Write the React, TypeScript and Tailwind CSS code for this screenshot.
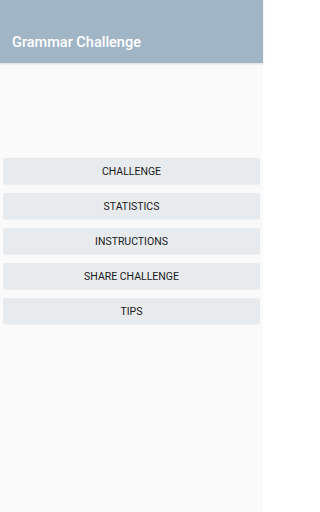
const items = ['CHALLENGE', 'STATISTICS', 'INSTRUCTIONS', 'SHARE CHALLENGE', 'TIPS']

export default function App() {
  return (
    <div className="flex h-[512px] w-[263px] flex-col bg-[#fafafa] font-['Roboto',sans-serif]">
      <header className="flex h-[63px] shrink-0 items-end bg-[#a0b5c6] px-3 pb-[13px] shadow-[0_1px_2px_rgba(0,0,0,0.12)]">
        <h1 className="text-[14.5px] font-medium leading-none text-white">Grammar Challenge</h1>
      </header>
      <div className="mt-[95px] flex flex-col gap-[9px] px-[3px]">
        {items.map((label) => (
          <button
            key={label}
            className="flex h-[26px] items-center justify-center rounded-[2px] bg-[#e8ebee] pt-[2px] text-[10.5px] leading-none text-[#1a1a1a] shadow-[0_1px_1px_rgba(0,0,0,0.04)]"
          >
            {label}
          </button>
        ))}
      </div>
    </div>
  )
}
